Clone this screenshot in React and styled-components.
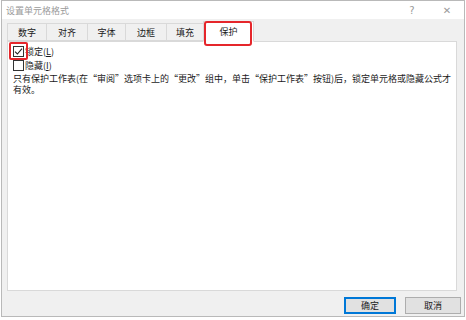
import React from 'react'
import styled, { createGlobalStyle } from 'styled-components'

const GlobalStyle = createGlobalStyle`
  html, body {
    margin: 0;
    padding: 0;
    background: #ffffff;
  }
  body {
    font-family: "Noto Sans CJK SC", "Noto Sans", sans-serif;
    color: #1a1a1a;
  }
`

const Dialog = styled.div`
  width: 464px;
  height: 317px;
  margin-left: 1px;
  box-sizing: border-box;
  border: 1px solid #b9b9b9;
  background: #f0f0f0;
  display: flex;
  flex-direction: column;
  overflow: hidden;
`

const TitleBar = styled.div`
  height: 18px;
  background: #ffffff;
  display: flex;
  align-items: center;
  padding: 0 0 0 4px;
  font-size: 9px;
  color: #9a9a9a;
  .title {
    flex: 1;
    line-height: 1;
  }
`

const TitleButton = styled.div`
  width: ${p => p.$w}px;
  height: 18px;
  display: flex;
  align-items: center;
  justify-content: center;
  color: #9a9a9a;
  font-family: "DejaVu Sans", sans-serif;
  font-size: 10px;
`

const Body = styled.div`
  flex: 1;
  display: flex;
  flex-direction: column;
  padding: 2px 7px 0 5px;
`

const TabStrip = styled.div`
  display: flex;
  align-items: flex-end;
  height: 20px;
  position: relative;
  z-index: 1;
`

const Tab = styled.div`
  position: relative;
  width: ${p => p.$w}px;
  height: ${p => (p.$active ? 21 : 18)}px;
  box-sizing: border-box;
  display: flex;
  align-items: center;
  justify-content: center;
  font-size: 9px;
  color: #1a1a1a;
  background: ${p => (p.$active ? '#ffffff' : '#f0f0f0')};
  border: 1px solid #d9d9d9;
  border-bottom: ${p => (p.$active ? '1px solid #ffffff' : '1px solid #d9d9d9')};
  margin-bottom: ${p => (p.$active ? -1 : 0)}px;
  margin-left: -1px;
  &:first-child {
    margin-left: 0;
  }
  ${p => p.$marked && `
    &::after {
      content: '';
      position: absolute;
      left: 0px;
      top: -1px;
      width: 48px;
      height: 25px;
      box-sizing: border-box;
      border: 2px solid #e5262b;
      border-radius: 3px;
    }
  `}
`

const Panel = styled.div`
  height: 250px;
  box-sizing: border-box;
  background: #ffffff;
  border: 1px solid #d9d9d9;
  padding: 3px 1px 0 5px;
  font-size: 9px;
  color: #1a1a1a;
`

const CheckRow = styled.label`
  display: flex;
  align-items: center;
  gap: 1px;
  height: 13px;
  margin-bottom: 1px;
  line-height: 1;
  u {
    text-decoration: underline;
  }
`

const Box = styled.span`
  position: relative;
  width: 11px;
  height: 11px;
  box-sizing: border-box;
  border: 1px solid #333333;
  background: #ffffff;
  display: flex;
  align-items: center;
  justify-content: center;
  flex-shrink: 0;
  ${p => p.$marked && `
    &::after {
      content: '';
      position: absolute;
      left: -5px;
      top: -5px;
      width: 19px;
      height: 18px;
      box-sizing: border-box;
      border: 2px solid #e5262b;
      border-radius: 2px;
    }
  `}
`

const Note = styled.p`
  margin: 1px 0 0 0;
  line-height: 11px;
  font-size: 9px;
`

const Footer = styled.div`
  flex: 1;
  display: flex;
  justify-content: flex-end;
  align-items: flex-start;
  gap: 9px;
  padding: 6px 0 0 0;
  margin-right: -4px;
`

const Button = styled.button`
  width: ${p => p.$w}px;
  height: 17px;
  box-sizing: border-box;
  padding: 0;
  font-family: "Noto Sans CJK SC", sans-serif;
  font-size: 9px;
  color: #1a1a1a;
  background: #e1e1e1;
  border: 1px solid ${p => (p.$primary ? '#0078d7' : '#adadad')};
  box-shadow: ${p => (p.$primary ? 'inset 0 0 0 1px #0078d7' : 'none')};
  display: flex;
  align-items: center;
  justify-content: center;
`

const tabs = [
  { label: '数字', w: 40 },
  { label: '对齐', w: 42 },
  { label: '字体', w: 39 },
  { label: '边框', w: 42 },
  { label: '填充', w: 38 },
  { label: '保护', w: 51, active: true },
]

export default function App () {
  return (
    <>
      <GlobalStyle />
      <Dialog>
        <TitleBar>
          <span className="title">设置单元格格式</span>
          <TitleButton $w={36}>?</TitleButton>
          <TitleButton $w={34}>✕</TitleButton>
        </TitleBar>
        <Body>
          <TabStrip>
            {tabs.map(t => (
              <Tab key={t.label} $w={t.w} $active={t.active} $marked={t.active}>
                {t.label}
              </Tab>
            ))}
          </TabStrip>
          <Panel>
            <CheckRow>
              <Box $marked>
                <svg width="9" height="9" viewBox="0 0 9 9">
                  <path d="M1 4.6 L3.4 7 L8 1.6" fill="none" stroke="#222" strokeWidth="1.1" />
                </svg>
              </Box>
              <span>锁定(<u>L</u>)</span>
            </CheckRow>
            <CheckRow>
              <Box />
              <span>隐藏(<u>I</u>)</span>
            </CheckRow>
            <Note>
              只有保护工作表(在“审阅”选项卡上的“更改”组中，单击“保护工作表”按钮)后，锁定单元格或隐藏公式才有效。
            </Note>
          </Panel>
          <Footer>
            <Button $w={52} $primary>确定</Button>
            <Button $w={56}>取消</Button>
          </Footer>
        </Body>
      </Dialog>
    </>
  )
}
